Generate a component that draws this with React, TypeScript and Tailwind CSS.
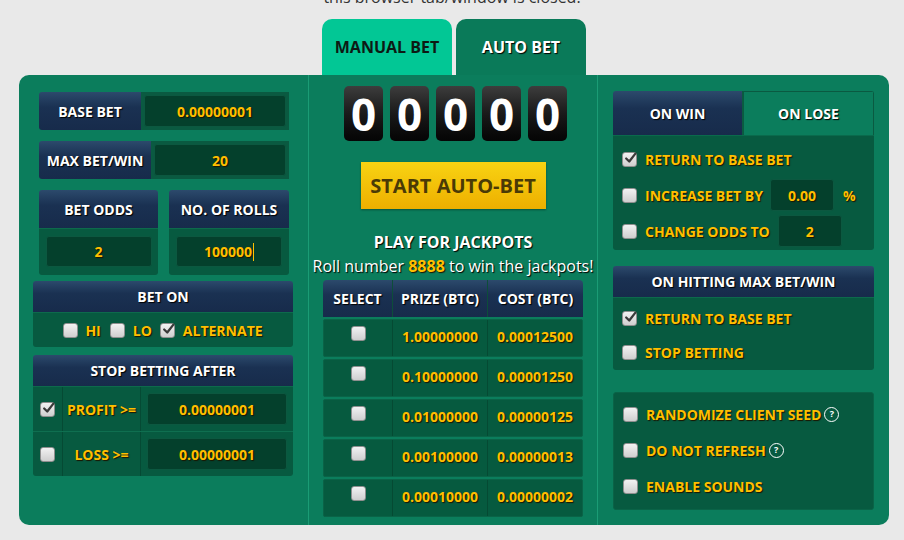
import React from "react";

const amber = "font-bold text-[#ffbf00] [text-shadow:1px_1px_1px_#1b1500]";
const whiteBold = "font-bold text-white [text-shadow:1px_1px_1px_#000]";
const navy = "bg-linear-to-b from-[#2c4a6c] via-[#1a3152] via-40% to-[#172b4b]";

function Check({ checked = false }: { checked?: boolean }) {
  return (
    <span className="relative inline-flex h-[15px] w-[15px] shrink-0 rounded-[3px] border border-[#8f8f8f] bg-linear-to-b from-[#f2f2f2] to-[#cfcfcf]">
      {checked && (
        <svg viewBox="0 0 16 16" className="absolute -top-[2px] left-[1px] h-[14px] w-[14px]">
          <path d="M2.5 8.5 L6 12 L13 3" fill="none" stroke="#3a3a3a" strokeWidth="2.6" strokeLinecap="round" strokeLinejoin="round" />
        </svg>
      )}
    </span>
  );
}

function Field({ children, className = "" }: { children: React.ReactNode; className?: string }) {
  return (
    <div
      className={`flex items-center justify-center rounded-[3px] border border-[#0c5840] bg-[#04402c] text-[14px] ${amber} ${className}`}
    >
      {children}
    </div>
  );
}

function Help() {
  return (
    <span className="ml-[3px] inline-flex h-[15px] w-[15px] items-center justify-center rounded-full border border-white text-[9px] font-bold text-white">
      ?
    </span>
  );
}

function OptionRow({ checked, label, children }: { checked?: boolean; label: string; children?: React.ReactNode }) {
  return (
    <div className="flex h-[32px] items-center pl-[9px]">
      <Check checked={checked} />
      <span className={`ml-[8px] text-[14px] ${amber}`}>{label}</span>
      {children}
    </div>
  );
}

const jackpots = [
  ["1.00000000", "0.00012500"],
  ["0.10000000", "0.00001250"],
  ["0.01000000", "0.00000125"],
  ["0.00100000", "0.00000013"],
  ["0.00010000", "0.00000002"],
];

export default function App() {
  return (
    <div className="min-h-screen w-[904px] bg-[#e9e9e9] font-['Open_Sans',sans-serif]">
      <div className="h-[19px] overflow-hidden text-center">
        <div className="-mt-[15px] text-[16px] leading-[24px] text-[#333]">this browser tab/window is closed.</div>
      </div>

      <div className="ml-[19px] w-[870px]">
        <div className="flex justify-center gap-[4px]">
          <div className="flex h-[56px] w-[130px] items-center justify-center rounded-t-[10px] bg-[#02c795] text-[16px] font-bold text-[#0d1a14]">
            MANUAL BET
          </div>
          <div className={`flex h-[56px] w-[130px] items-center justify-center rounded-t-[10px] bg-[#0a7a59] text-[16px] ${whiteBold}`}>
            AUTO BET
          </div>
        </div>

        <div className="grid h-[450px] grid-cols-[289px_290px_291px] rounded-[10px] bg-[#0b7d5c]">
          {/* left column */}
          <div className="flex flex-col pl-[14px] pr-[15px] pt-[17px]">
            <div className="ml-[6px] mr-[4px] flex flex-col gap-[11px]">
              <div className="flex h-[38px]">
                <div className={`flex w-[102px] items-center justify-center rounded-l-[3px] text-[14px] ${navy} ${whiteBold}`}>BASE BET</div>
                <div className="flex flex-1 bg-[#0a5a41] p-[3px]">
                  <Field className="flex-1">0.00000001</Field>
                </div>
              </div>
              <div className="flex h-[38px]">
                <div className={`flex w-[112px] items-center justify-center rounded-l-[3px] text-[14px] ${navy} ${whiteBold}`}>MAX BET/WIN</div>
                <div className="flex flex-1 bg-[#0a5a41] p-[3px]">
                  <Field className="flex-1">20</Field>
                </div>
              </div>
              <div className="flex gap-[11px]">
                {[
                  ["BET ODDS", "2", "w-[119px]"],
                  ["NO. OF ROLLS", "100000", "w-[120px]"],
                ].map(([title, value, w]) => (
                  <div key={title} className={`flex h-[85px] flex-col overflow-hidden rounded-[3px] ${w}`}>
                    <div className={`flex h-[39px] items-center justify-center border-b border-[#0d6a4c] text-[14px] ${navy} ${whiteBold}`}>{title}</div>
                    <div className="flex flex-1 items-start justify-center bg-[#075a40] pt-[7px]">
                      <Field className="h-[31px] w-[106px]">
                        {value}
                        {title === "NO. OF ROLLS" && <span className="ml-[1px] h-[18px] w-px bg-[#ffbf00]" />}
                      </Field>
                    </div>
                  </div>
                ))}
              </div>
            </div>

            <div className="mt-[6px] flex h-[66px] flex-col overflow-hidden rounded-[3px]">
              <div className={`flex h-[32px] items-center justify-center border-b border-[#0d6a4c] text-[14px] ${navy} ${whiteBold}`}>BET ON</div>
              <div className="flex flex-1 items-center justify-center bg-[#075a40] text-[14px]">
                <Check />
                <span className={`ml-[7px] mr-[9px] ${amber}`}>HI</span>
                <Check />
                <span className={`ml-[8px] mr-[8px] ${amber}`}>LO</span>
                <Check checked />
                <span className={`ml-[8px] ${amber}`}>ALTERNATE</span>
              </div>
            </div>

            <div className="mt-[8px] flex flex-col overflow-hidden rounded-[3px]">
              <div className={`flex h-[32px] items-center justify-center border-b border-[#0d6a4c] text-[14px] ${navy} ${whiteBold}`}>STOP BETTING AFTER</div>
              {[
                ["PROFIT >=", true, "h-[45px] border-b border-[#0f6f50]"],
                ["LOSS >=", false, "h-[44px]"],
              ].map(([label, checked, h]) => (
                <div key={label as string} className={`flex bg-[#075a40] ${h}`}>
                  <div className="flex w-[30px] items-center justify-center border-r border-[#054a34]">
                    <Check checked={checked as boolean} />
                  </div>
                  <div className={`flex w-[78px] items-center justify-center border-r border-[#054a34] text-[14px] ${amber}`}>{label as string}</div>
                  <div className="flex flex-1 items-center px-[6px]">
                    <Field className="h-[32px] flex-1">0.00000001</Field>
                  </div>
                </div>
              ))}
            </div>
          </div>

          {/* middle column */}
          <div className="flex flex-col items-center border-x border-[#1b9c75] pt-[11px]">
            <div className="flex gap-[7px] pl-[5px]">
              {[0, 1, 2, 3, 4].map((i) => (
                <div
                  key={i}
                  className="flex h-[55px] w-[39px] items-center justify-center rounded-[5px] bg-linear-to-b from-[#3d3d3d] via-[#1a1a1a] to-[#050505] text-[44px] leading-none font-bold text-white"
                >
                  0
                </div>
              ))}
            </div>
            <div className="mt-[21px] flex h-[47px] w-[185px] items-center justify-center bg-linear-to-b from-[#f8d312] to-[#edaf00] text-[20px] font-bold text-[#4a3a06] shadow-[0_1px_2px_rgba(0,0,0,0.35)]">
              START AUTO-BET
            </div>
            <div className={`mt-[21px] text-[16px] leading-[24px] ${whiteBold}`}>PLAY FOR JACKPOTS</div>
            <div className="text-[16px] leading-[24px] whitespace-nowrap text-white [text-shadow:1px_1px_1px_#000]">
              Roll number <span className={amber}>8888</span> to win the jackpots!
            </div>
            <div className="mt-[2px] flex w-[260px] flex-col gap-[2px]">
              <div className={`flex h-[37px] rounded-t-[4px] text-[14px] ${navy} ${whiteBold}`}>
                <div className="flex w-[70px] items-center justify-center border-r border-[#0d4d3a]">SELECT</div>
                <div className="flex w-[95px] items-center justify-center border-r border-[#0d4d3a]">PRIZE (BTC)</div>
                <div className="flex flex-1 items-center justify-center">COST (BTC)</div>
              </div>
              {jackpots.map(([prize, cost]) => (
                <div key={prize} className={`flex h-[38px] rounded-[2px] border border-[#0a6347] bg-[#065a3f] text-[14px] ${amber}`}>
                  <div className="flex w-[69px] justify-center border-r border-[#054a33] pt-[6px]">
                    <Check />
                  </div>
                  <div className="flex w-[95px] items-center justify-center border-r border-[#054a33] pb-[4px]">{prize}</div>
                  <div className="flex flex-1 items-center justify-center pb-[4px]">{cost}</div>
                </div>
              ))}
            </div>
          </div>

          {/* right column */}
          <div className="flex flex-col pl-[15px] pr-[15px] pt-[16px]">
            <div className="flex flex-col overflow-hidden rounded-[3px]">
              <div className="flex h-[44px]">
                <div className={`flex w-[130px] items-center justify-center border-r border-[#0b5a41] text-[14px] ${navy} ${whiteBold}`}>ON WIN</div>
                <div className={`flex flex-1 items-center justify-center border border-b-0 border-[#0a5a41] bg-[#0b7d5c] text-[14px] ${whiteBold}`}>ON LOSE</div>
              </div>
              <div className="flex h-[115px] flex-col gap-[4px] border-t border-[#0a6a4c] bg-[#075a40] pt-[7px]">
                <OptionRow checked label="RETURN TO BASE BET" />
                <OptionRow label="INCREASE BET BY">
                  <Field className="ml-[7px] h-[32px] w-[64px]">0.00</Field>
                  <span className={`ml-[9px] text-[14px] ${amber}`}>%</span>
                </OptionRow>
                <OptionRow label="CHANGE ODDS TO">
                  <Field className="ml-[8px] h-[32px] w-[64px]">2</Field>
                </OptionRow>
              </div>
            </div>

            <div className="mt-[16px] flex flex-col overflow-hidden rounded-[3px]">
              <div className={`flex h-[32px] items-center justify-center border-b border-[#0d6a4c] text-[14px] ${navy} ${whiteBold}`}>ON HITTING MAX BET/WIN</div>
              <div className="flex h-[72px] flex-col gap-[2px] bg-[#075a40] pt-[4px]">
                <OptionRow checked label="RETURN TO BASE BET" />
                <OptionRow label="STOP BETTING" />
              </div>
            </div>

            <div className="mt-[22px] flex h-[118px] flex-col gap-[4px] rounded-[3px] border border-[#0a6347] bg-[#075a40] pt-[5px]">
              <OptionRow label="RANDOMIZE CLIENT SEED">
                <Help />
              </OptionRow>
              <OptionRow label="DO NOT REFRESH">
                <Help />
              </OptionRow>
              <OptionRow label="ENABLE SOUNDS" />
            </div>
          </div>
        </div>
      </div>
    </div>
  );
}
